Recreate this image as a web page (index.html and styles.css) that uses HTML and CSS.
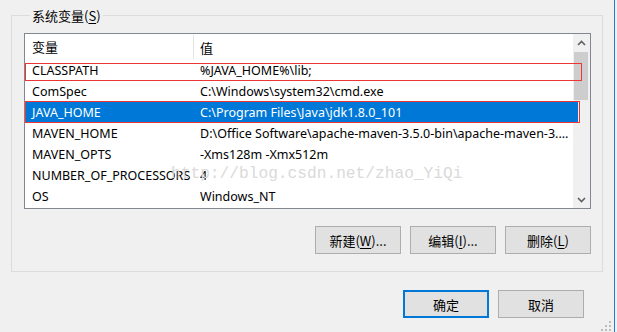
FILE: index.html
```html
<!DOCTYPE html>
<html lang="zh-CN">
<head>
  <meta charset="UTF-8">
  <title>系统变量</title>
  <link rel="stylesheet" href="styles.css">
</head>
<body>
  <div class="dialog">
    <div class="group">
      <div class="group-title">系统变量(<u>S</u>)</div>

      <div class="list">
        <div class="list-body">
          <div class="list-head">
            <div class="col-name head-name">变量</div>
            <div class="col-value">值</div>
          </div>
          <div class="row"><div class="col-name">CLASSPATH</div><div class="col-value">%JAVA_HOME%\lib;</div></div>
          <div class="row"><div class="col-name">ComSpec</div><div class="col-value">C:\Windows\system32\cmd.exe</div></div>
          <div class="row selected"><div class="col-name">JAVA_HOME</div><div class="col-value">C:\Program Files\Java\jdk1.8.0_101</div></div>
          <div class="row"><div class="col-name">MAVEN_HOME</div><div class="col-value">D:\Office Software\apache-maven-3.5.0-bin\apache-maven-3....</div></div>
          <div class="row"><div class="col-name">MAVEN_OPTS</div><div class="col-value">-Xms128m -Xmx512m</div></div>
          <div class="row"><div class="col-name">NUMBER_OF_PROCESSORS</div><div class="col-value">4</div></div>
          <div class="row"><div class="col-name">OS</div><div class="col-value">Windows_NT</div></div>
        </div>

        <div class="scrollbar">
          <div class="arrow">
            <svg width="9" height="6" viewBox="0 0 9 6"><path d="M1 5 L4.5 1.5 L8 5" fill="none" stroke="#606060" stroke-width="1.6"/></svg>
          </div>
          <div class="thumb"></div>
          <div class="track"></div>
          <div class="arrow">
            <svg width="9" height="6" viewBox="0 0 9 6"><path d="M1 1 L4.5 4.5 L8 1" fill="none" stroke="#606060" stroke-width="1.6"/></svg>
          </div>
        </div>

        <div class="watermark">http://blog.csdn.net/zhao_YiQi</div>
        <div class="mark mark-classpath"></div>
        <div class="mark mark-java"></div>
      </div>

      <div class="buttons">
        <button>新建(<u>W</u>)...</button>
        <button>编辑(<u>I</u>)...</button>
        <button>删除(<u>L</u>)</button>
      </div>
    </div>

    <div class="buttons footer">
      <button class="default">确定</button>
      <button>取消</button>
    </div>

    <svg class="grip" width="10" height="10" viewBox="0 0 10 10">
      <rect x="8" y="0" width="2" height="2" fill="#bcbcbc"/>
      <rect x="4" y="4" width="2" height="2" fill="#bcbcbc"/>
      <rect x="8" y="4" width="2" height="2" fill="#bcbcbc"/>
      <rect x="0" y="8" width="2" height="2" fill="#bcbcbc"/>
      <rect x="4" y="8" width="2" height="2" fill="#bcbcbc"/>
      <rect x="8" y="8" width="2" height="2" fill="#bcbcbc"/>
    </svg>
  </div>
</body>
</html>
```

FILE: styles.css
```css
body {
  margin: 0;
  background-color: #f0f0f0;
  font-family: "Noto Sans", "Noto Sans CJK SC", sans-serif;
  font-size: 12.5px;
  color: #000;
  overflow: hidden;
}

.dialog {
  position: relative;
  width: 615px;
  height: 332px;
  border-right: 1px solid #1a7fd8;
  padding-top: 15px;
  box-sizing: border-box;
}

.group {
  margin-left: 11px;
  width: 592px;
  height: 257px;
  box-sizing: border-box;
  border: 1px solid #dcdcdc;
  padding: 0 11px 0 12px;
  display: flex;
  flex-direction: column;
}

.group-title {
  align-self: flex-start;
  margin: -9px 0 0 6px;
  padding: 0 2px;
  line-height: 17px;
  font-size: 13px;
  background-color: #f0f0f0;
  font-family: "Noto Sans CJK SC", sans-serif;
}

.group-title u,
button u {
  text-decoration-thickness: 1px;
  text-underline-offset: 2px;
}

.list {
  position: relative;
  margin-top: 9px;
  height: 176px;
  box-sizing: border-box;
  border: 1px solid #828790;
  background-color: #fff;
  display: flex;
}

.list-body {
  position: relative;
  z-index: 1;
  flex: 1;
  min-width: 0;
  display: flex;
  flex-direction: column;
}

.list-head {
  height: 26px;
  display: flex;
  align-items: center;
  font-size: 13px;
  font-family: "Noto Sans CJK SC", sans-serif;
}

.row {
  height: 21px;
  display: flex;
  align-items: center;
  white-space: nowrap;
}

.col-name {
  width: 169px;
  padding-left: 7px;
  box-sizing: border-box;
  flex-shrink: 0;
}

.head-name {
  border-right: 1px solid #e5e5e5;
  height: 24px;
  line-height: 24px;
}

.col-value {
  flex: 1;
  min-width: 0;
  padding-left: 6px;
  overflow: hidden;
}

.selected {
  background-color: #0078d7;
  box-shadow: 5px 0 0 #0078d7;
  color: #fff;
}

.scrollbar {
  width: 17px;
  flex-shrink: 0;
  background-color: #f0f0f0;
  display: flex;
  flex-direction: column;
}

.arrow {
  height: 17px;
  display: flex;
  align-items: center;
  justify-content: center;
}

.thumb {
  height: 48px;
  margin: 1px 2px 0 1px;
  background-color: #cdcdcd;
}

.track {
  flex: 1;
}

.watermark {
  position: absolute;
  left: 146px;
  top: 131px;
  z-index: 2;
  font-family: "Liberation Mono", monospace;
  font-size: 16.2px;
  line-height: 18px;
  color: #dadada;
  white-space: nowrap;
  pointer-events: none;
}

.mark {
  position: absolute;
  left: 0;
  z-index: 3;
  border: 1px solid #ee3535;
  box-sizing: border-box;
}

.mark-classpath {
  top: 29px;
  width: 557px;
  height: 18px;
}

.mark-java {
  top: 67px;
  width: 555px;
  height: 22px;
}

.buttons {
  display: flex;
  justify-content: flex-end;
  gap: 9px;
  margin-top: 17px;
}

button {
  width: 86px;
  height: 28px;
  padding: 0;
  background-color: #e1e1e1;
  border: 1px solid #adadad;
  font-family: "Noto Sans CJK SC", sans-serif;
  font-size: 13px;
  color: #000;
}

.footer {
  margin-top: 18px;
  padding-right: 30px;
}

.default {
  border: 2px solid #0078d7;
}

.grip {
  position: absolute;
  right: 3px;
  bottom: 1px;
}
```
